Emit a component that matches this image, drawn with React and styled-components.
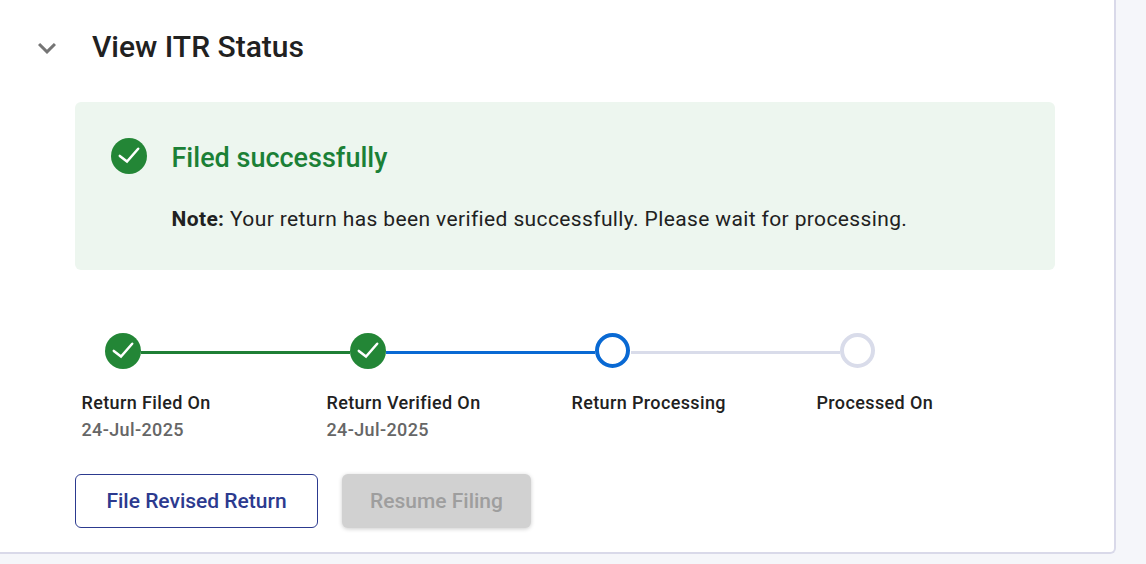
import React from 'react';
import styled, { createGlobalStyle } from 'styled-components';

const GlobalStyle = createGlobalStyle`
  * {
    box-sizing: border-box;
  }

  body {
    margin: 0;
    background-color: #f5f6fa;
    font-family: Roboto, sans-serif;
    color: #212121;
    overflow: hidden;
  }
`;

const Card = styled.main`
  width: 1116px;
  height: 554px;
  padding: 28px 59px 0 29px;
  background-color: #ffffff;
  border-right: 2px solid #d9d9e9;
  border-bottom: 2px solid #d9d9e9;
  border-bottom-right-radius: 6px;
`;

const Header = styled.header`
  display: flex;
  align-items: center;
  gap: 27px;
  height: 38px;
`;

const Chevron = styled.svg`
  width: 36px;
  height: 36px;
  margin-top: 2px;
  fill: #757575;
`;

const Title = styled.h1`
  margin: 0;
  font-size: 30px;
  font-weight: 500;
  line-height: 36px;
`;

const Content = styled.div`
  margin-left: 46px;
`;

const Banner = styled.section`
  display: flex;
  gap: 24.5px;
  height: 168px;
  margin-top: 36px;
  padding: 36px;
  border-radius: 6px;
  background-color: #edf6ef;
`;

const BannerTitle = styled.h2`
  margin: 0;
  color: #1b8036;
  font-size: 27px;
  font-weight: 500;
  line-height: 40px;
`;

const Note = styled.p`
  margin: 26px 0 0;
  font-size: 21px;
  line-height: 30px;
  letter-spacing: 0.375px;
`;

const CheckCircle = styled.svg`
  flex: none;
  width: 36px;
  height: 36px;
`;

const Steps = styled.ol`
  display: flex;
  height: 108px;
  margin: 63px 0 0;
  padding: 0;
  list-style: none;
`;

const Step = styled.li`
  width: 245px;
`;

const Track = styled.div`
  display: flex;
  height: 36px;
  width: 245px;
  margin-left: 30px;
`;

const Ring = styled.span`
  width: 35px;
  height: 35px;
  margin-right: 1px;
  border: 4px solid ${(props) => props.$color};
  border-radius: 50%;
`;

const Line = styled.span`
  flex: 1;
  height: 3px;
  margin-top: 18px;
  background-color: ${(props) => props.$color};
`;

const StepLabel = styled.div`
  margin: 20px 0 0 6.5px;
  font-size: 18px;
  font-weight: 500;
  line-height: 27px;
  letter-spacing: 0.375px;
`;

const StepDate = styled.div`
  margin-left: 6.5px;
  color: #666666;
  font-size: 18px;
  font-weight: 500;
  line-height: 27px;
  letter-spacing: 0.375px;
`;

const Actions = styled.div`
  display: flex;
  gap: 24px;
  margin-top: 33px;
`;

const Button = styled.button`
  width: ${(props) => props.$width};
  height: 54px;
  padding: 0;
  border: 1px solid #2c3a8f;
  border-radius: 6px;
  background-color: #ffffff;
  color: #2c3a8f;
  font-family: inherit;
  font-size: 21px;
  font-weight: 500;

  &:disabled {
    border: none;
    background-color: #d1d1d1;
    color: #9e9e9e;
    box-shadow: 0 1px 4px rgba(0, 0, 0, 0.2);
  }
`;

const GREEN = '#1f7f35';
const BLUE = '#0969d3';
const GREY = '#d9dcea';

const steps = [
    { label: 'Return Filed On', date: '24-Jul-2025', done: true, line: GREEN },
    { label: 'Return Verified On', date: '24-Jul-2025', done: true, line: BLUE },
    { label: 'Return Processing', ring: BLUE, line: GREY },
    { label: 'Processed On', ring: GREY },
];

function Check() {
    return (
        <CheckCircle viewBox="0 0 36 36">
            <circle cx="18" cy="18" r="18" fill="#238636" />
            <path
                d="M8.8 17.9 16 23.6 27.2 10.8"
                fill="none"
                stroke="#ffffff"
                strokeWidth="2.5"
                strokeLinecap="round"
            />
        </CheckCircle>
    );
}

function App() {
    return (
        <>
            <GlobalStyle />
            <Card>
                <Header>
                    <Chevron viewBox="0 0 24 24">
                        <path d="M7.41 8.59 12 13.17l4.59-4.58L18 10l-6 6-6-6z" />
                    </Chevron>
                    <Title>View ITR Status</Title>
                </Header>
                <Content>
                    <Banner>
                        <Check />
                        <div>
                            <BannerTitle>Filed successfully</BannerTitle>
                            <Note>
                                <strong>Note:</strong> Your return has been verified successfully. Please wait for processing.
                            </Note>
                        </div>
                    </Banner>
                    <Steps>
                        {steps.map((step) => (
                            <Step key={step.label}>
                                <Track>
                                    {step.done ? <Check /> : <Ring $color={step.ring} />}
                                    {step.line && <Line $color={step.line} />}
                                </Track>
                                <StepLabel>{step.label}</StepLabel>
                                {step.date && <StepDate>{step.date}</StepDate>}
                            </Step>
                        ))}
                    </Steps>
                    <Actions>
                        <Button $width="243px">File Revised Return</Button>
                        <Button $width="189px" disabled>Resume Filing</Button>
                    </Actions>
                </Content>
            </Card>
        </>
    );
}

export default App;
